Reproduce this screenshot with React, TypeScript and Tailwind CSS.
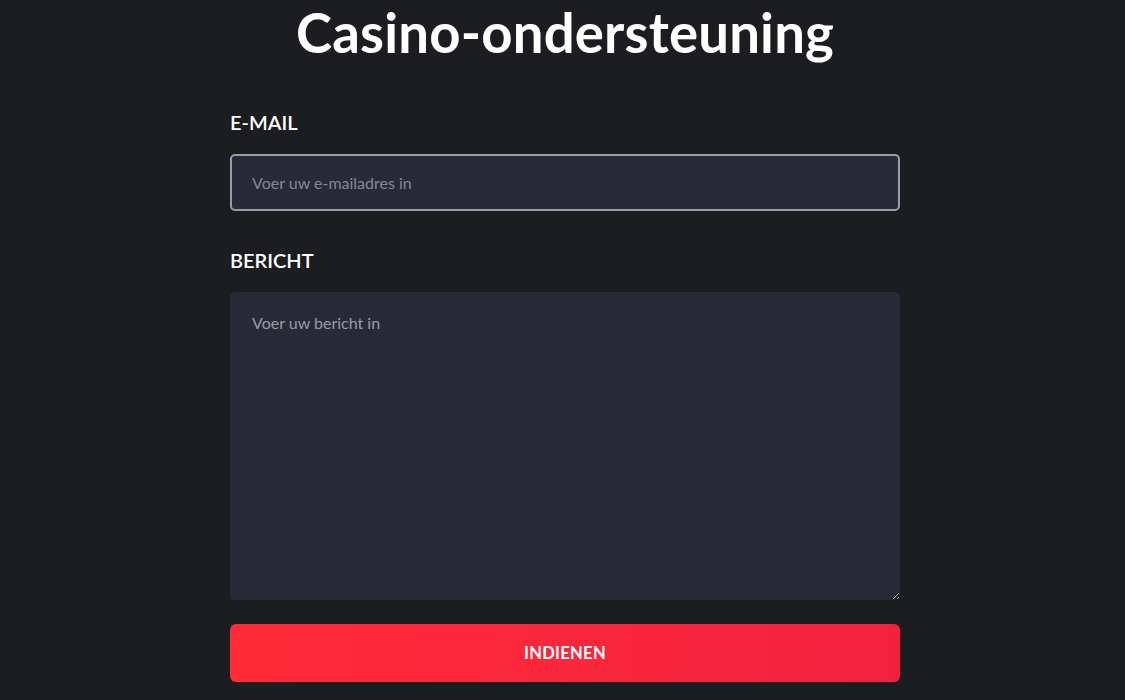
export default function App() {
  return (
    <div className="min-h-[700px] w-full bg-[#1c1d21] flex justify-center pl-[5px]" style={{ fontFamily: "Lato, 'Noto Sans', sans-serif" }}>
      <div className="w-[670px] flex flex-col">
        <h1 className="text-center text-white font-bold text-[54.5px] leading-[64px] mt-0 tracking-[0.2px]">Casino-ondersteuning</h1>
        <label className="text-white text-[20px] font-semibold leading-[24px] mt-[46px]">E-MAIL</label>
        <input
          type="email"
          placeholder="Voer uw e-mailadres in"
          className="mt-[20px] h-[57px] w-full rounded-[5px] border-2 border-[#9c9ca4] bg-[#282a38] px-[20px] text-[16px] text-white placeholder:text-[#868896] outline-none"
        />
        <label className="text-white text-[20px] font-semibold leading-[24px] mt-[37px]">BERICHT</label>
        <textarea
          placeholder="Voer uw bericht in"
          className="mt-[20px] h-[308px] w-full rounded-[5px] bg-[#282a38] px-[22px] py-[19px] text-[16px] text-white placeholder:text-[#9a9ba6] outline-none"
        />
        <button className="mt-[24px] h-[58px] w-full rounded-[6px] bg-gradient-to-r from-[#ff2b36] to-[#f5203f] text-white font-bold text-[16.5px] tracking-[0.3px]">
          INDIENEN
        </button>
      </div>
    </div>
  );
}
